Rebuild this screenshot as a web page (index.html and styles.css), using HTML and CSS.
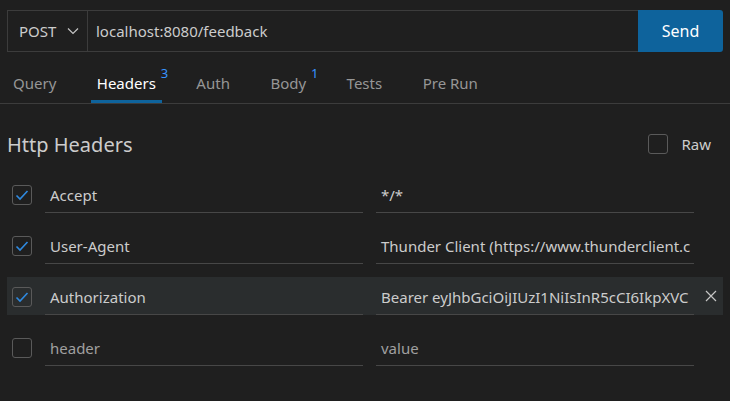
FILE: index.html
```html
<!DOCTYPE html>
<html>
<head>
<meta charset="utf-8">
<link rel="stylesheet" href="styles.css">
</head>
<body>
<div class="urlbar">
  <div class="urlbox">
    <div class="method">
      <span>POST</span>
      <svg class="chev" width="12" height="8" viewBox="0 0 12 8"><path d="M1 1.5 L6 6.5 L11 1.5" fill="none" stroke="#c5c5c5" stroke-width="1.2"/></svg>
    </div>
    <div class="url">localhost:8080/feedback</div>
  </div>
  <button class="send">Send</button>
</div>
<div class="tabs">
  <div class="tab">Query</div>
  <div class="tab active">Headers<sup class="badge">3</sup></div>
  <div class="tab">Auth</div>
  <div class="tab">Body<sup class="badge">1</sup></div>
  <div class="tab">Tests</div>
  <div class="tab">Pre Run</div>
</div>
<div class="panel">
  <div class="panel-head">
    <div class="title">Http Headers</div>
    <label class="raw"><span class="cb"></span><span>Raw</span></label>
  </div>
  <div class="rows">
    <div class="row">
      <span class="cb checked"><svg width="16" height="16" viewBox="0 0 16 16"><path d="M2.5 8.5 L6 12 L13.5 4" fill="none" stroke="#2f8ae0" stroke-width="1.6"/></svg></span>
      <div class="field">Accept</div>
      <div class="field">*/*</div>
      <span class="x"></span>
    </div>
    <div class="row">
      <span class="cb checked"><svg width="16" height="16" viewBox="0 0 16 16"><path d="M2.5 8.5 L6 12 L13.5 4" fill="none" stroke="#2f8ae0" stroke-width="1.6"/></svg></span>
      <div class="field">User-Agent</div>
      <div class="field">Thunder Client (https://www.thunderclient.c</div>
      <span class="x"></span>
    </div>
    <div class="row hover">
      <span class="cb checked"><svg width="16" height="16" viewBox="0 0 16 16"><path d="M2.5 8.5 L6 12 L13.5 4" fill="none" stroke="#2f8ae0" stroke-width="1.6"/></svg></span>
      <div class="field">Authorization</div>
      <div class="field">Bearer eyJhbGciOiJIUzI1NiIsInR5cCI6IkpXVC</div>
      <span class="x"><svg width="12" height="12" viewBox="0 0 12 12"><path d="M1 1 L11 11 M11 1 L1 11" stroke="#c5c5c5" stroke-width="1.2"/></svg></span>
    </div>
    <div class="row">
      <span class="cb"></span>
      <div class="field ph">header</div>
      <div class="field ph">value</div>
      <span class="x"></span>
    </div>
  </div>
</div>
</body>
</html>
```

FILE: styles.css
```css
html, body {
  margin: 0;
  padding: 0;
  background: #1f1f1f;
  color: #cccccc;
  font-family: "Noto Sans", "Open Sans", sans-serif;
  font-size: 14px;
}
.urlbar {
  display: flex;
  padding: 10px 7px 0 7px;
  height: 42px;
}
.urlbox {
  flex: 1;
  display: flex;
  border: 1px solid #3c3c3c;
  border-right: none;
  box-sizing: border-box;
  height: 42px;
}
.method {
  width: 80px;
  border-right: 1px solid #3c3c3c;
  display: flex;
  align-items: center;
  padding-left: 11px;
  box-sizing: border-box;
  gap: 11px;
  font-size: 15px;
}
.url {
  display: flex;
  align-items: center;
  padding-left: 8px;
  font-size: 15px;
}
.send {
  width: 85px;
  height: 42px;
  background: #0e639c;
  color: #ffffff;
  border: none;
  border-radius: 0 3px 3px 0;
  font-family: inherit;
  font-size: 16px;
  padding: 0;
}
.tabs {
  display: flex;
  gap: 28.5px;
  padding: 0 7px;
  margin-top: 15px;
  border-bottom: 1px solid #3c3c3c;
  height: 36px;
}
.tab {
  position: relative;
  padding: 0 6px;
  color: #969696;
  font-size: 15px;
  line-height: 32px;
  border-bottom: 3px solid transparent;
}
.tab.active {
  color: #ffffff;
  border-bottom-color: #0e639c;
}
.badge {
  position: absolute;
  left: calc(100% - 1px);
  top: -2px;
  color: #3794ff;
  font-size: 13px;
  line-height: 17px;
}
.panel {
  padding: 0 7px;
}
.panel-head {
  display: flex;
  justify-content: space-between;
  align-items: center;
  margin-top: 27px;
  height: 26px;
}
.title {
  font-size: 20px;
  color: #cccccc;
}
.raw {
  display: flex;
  align-items: center;
  gap: 13px;
  font-size: 15px;
  padding-right: 12px;
}
.cb {
  width: 20px;
  height: 20px;
  box-sizing: border-box;
  border: 1px solid #5a5a5a;
  border-radius: 3px;
  display: flex;
  align-items: center;
  justify-content: center;
  flex: none;
}
.rows {
  margin-top: 18px;
  display: flex;
  flex-direction: column;
  gap: 13px;
}
.row {
  display: flex;
  align-items: center;
  height: 38px;
  padding-left: 5px;
}
.row.hover {
  background: #2a2d2e;
}
.row .cb {
  margin-right: 13px;
  margin-top: 1px;
}
.field {
  width: 318px;
  height: 38px;
  box-sizing: border-box;
  border-bottom: 1px solid #474747;
  padding: 3px 5px 0 5px;
  display: flex;
  align-items: center;
  white-space: nowrap;
  overflow: hidden;
  font-size: 15px;
  color: #cccccc;
}
.field + .field {
  margin-left: 13px;
}
.field.ph {
  color: #a0a0a0;
}
.x {
  flex: 1;
  display: flex;
  justify-content: flex-end;
  align-items: center;
  padding-right: 6px;
}
```
